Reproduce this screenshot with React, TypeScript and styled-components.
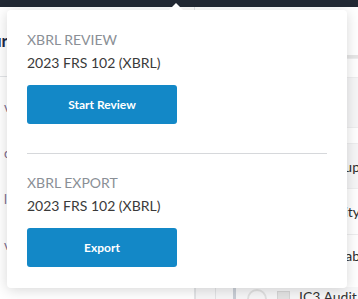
import React from 'react';
import styled, { createGlobalStyle } from 'styled-components';

const GlobalStyle = createGlobalStyle`
  html, body {
    margin: 0;
    padding: 0;
    background: #ffffff;
    font-family: Lato, 'Liberation Sans', sans-serif;
  }
  * {
    box-sizing: border-box;
  }
`;

const Page = styled.div`
  position: relative;
  width: 358px;
  height: 299px;
  overflow: hidden;
  background: #ffffff;
`;

const TopBar = styled.div`
  height: 7px;
  background: #222934;
`;

const Body = styled.div`
  display: grid;
  grid-template-columns: 195px 1fr;
  height: 292px;
`;

const LeftPane = styled.div`
  border-right: 1px solid #e3e5e8;
  display: flex;
  flex-direction: column;
  overflow: hidden;
`;

const PaneTitle = styled.div`
  padding-top: 23px;
  margin-left: -26px;
  height: 70px;
  font-size: 17px;
  font-weight: 700;
  color: #1d2b4a;
  border-bottom: 1px solid #e3e5e8;
  white-space: nowrap;
`;

const PaneList = styled.div`
  padding-top: 7px;
  display: flex;
  flex-direction: column;
`;

const PaneItem = styled.div`
  height: 46px;
  display: flex;
  align-items: center;
  padding-left: 4px;
  font-size: 13px;
  color: #7b6a8c;
`;

const RightPane = styled.div`
  display: flex;
  flex-direction: column;
  overflow: hidden;
`;

const Toolbar = styled.div`
  height: 51px;
  flex-shrink: 0;
  border-bottom: 3px solid #e6e6e6;
`;

const RightRow = styled.div<{ $shade?: boolean; $h: number }>`
  height: ${(p) => p.$h}px;
  flex-shrink: 0;
  background: ${(p) => (p.$shade ? '#f6f6f7' : '#ffffff')};
  border-top: 1px solid #eeeeef;
  display: flex;
  align-items: center;
  justify-content: flex-end;
  margin-right: -2px;
  font-size: 14px;
  color: #2e2e2e;
  white-space: nowrap;
  overflow: hidden;
`;

const TableRow = styled.div`
  margin-top: 11px;
  height: 14px;
  flex-shrink: 0;
  display: flex;
  align-items: flex-start;
  background: #f7f7f8;
  overflow: hidden;
`;

const Cell = styled.div<{ $w: number; $thick?: boolean }>`
  width: ${(p) => p.$w}px;
  height: 14px;
  border-left: ${(p) => (p.$thick ? '3px solid #c9ced6' : '1px solid #e2e3e5')};
  flex-shrink: 0;
`;

const Radio = styled.div`
  width: 20px;
  height: 20px;
  border: 2px solid #e1e1e1;
  border-radius: 50%;
  margin: 2px 0 0 11px;
  flex-shrink: 0;
`;

const Check = styled.div`
  width: 13px;
  height: 13px;
  background: #e4e4e4;
  border: 1px solid #d6d6d6;
  margin: 4px 0 0 10px;
  flex-shrink: 0;
`;

const AuditText = styled.span`
  margin: 2px 0 0 9px;
  font-size: 14px;
  line-height: 16px;
  color: #333;
  white-space: nowrap;
`;

const Popover = styled.div`
  position: absolute;
  left: 7px;
  top: 10px;
  width: 340px;
  padding: 20px 20px 21px;
  background: #ffffff;
  border-radius: 4px;
  box-shadow: 0 2px 14px rgba(0, 0, 0, 0.16);
`;

const Arrow = styled.div`
  position: absolute;
  top: -7px;
  left: 162px;
  width: 0;
  height: 0;
  border-left: 7px solid transparent;
  border-right: 7px solid transparent;
  border-bottom: 7px solid #ffffff;
`;

const Section = styled.div`
  display: flex;
  flex-direction: column;
  align-items: flex-start;
`;

const SectionTitle = styled.div`
  font-size: 14px;
  line-height: 20px;
  color: #8a8f96;
  text-transform: uppercase;
  margin-bottom: 3px;
`;

const SectionText = styled.div`
  font-size: 14px;
  line-height: 20px;
  color: #3a3a3a;
  margin-bottom: 12px;
`;

const ActionButton = styled.button`
  width: 150px;
  height: 39px;
  border: none;
  border-radius: 3px;
  background: #1388c7;
  color: #ffffff;
  font-family: Lato, 'Liberation Sans', sans-serif;
  font-size: 12px;
  font-weight: 700;
  cursor: pointer;
`;

const Divider = styled.hr`
  border: none;
  border-top: 1px solid #d6d8db;
  margin: 29px 0 19px;
`;

const sections = [
  { title: 'XBRL Review', text: '2023 FRS 102 (XBRL)', action: 'Start Review' },
  { title: 'XBRL Export', text: '2023 FRS 102 (XBRL)', action: 'Export' }
];

export default function App() {
  return (
    <Page>
      <GlobalStyle />
      <TopBar />
      <Body>
        <LeftPane>
          <PaneTitle>Tour</PaneTitle>
          <PaneList>
            <PaneItem>v</PaneItem>
            <PaneItem>c</PaneItem>
            <PaneItem>l</PaneItem>
            <PaneItem>v</PaneItem>
          </PaneList>
        </LeftPane>
        <RightPane>
          <Toolbar />
          <RightRow $h={19} />
          <RightRow $h={50} $shade />
          <RightRow $h={16} />
          <RightRow $h={45} $shade>Group</RightRow>
          <RightRow $h={46}>Entity</RightRow>
          <RightRow $h={42}>Tab</RightRow>
          <TableRow>
            <Cell $w={20} />
            <Cell $w={18} />
            <Cell $w={3} $thick />
            <Radio />
            <Check />
            <AuditText>IC3 Audit</AuditText>
          </TableRow>
        </RightPane>
      </Body>
      <Popover>
        <Arrow />
        {sections.map((s, i) => (
          <React.Fragment key={s.title}>
            {i > 0 && <Divider />}
            <Section>
              <SectionTitle>{s.title}</SectionTitle>
              <SectionText>{s.text}</SectionText>
              <ActionButton>{s.action}</ActionButton>
            </Section>
          </React.Fragment>
        ))}
      </Popover>
    </Page>
  );
}
